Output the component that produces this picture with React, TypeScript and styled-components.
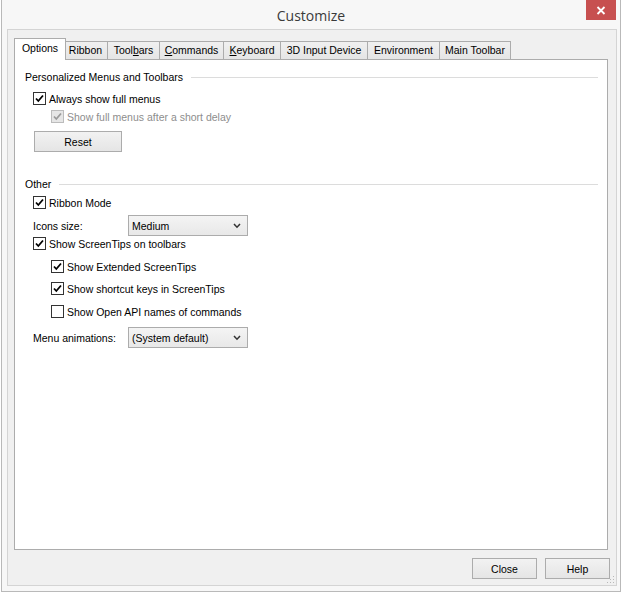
import React from "react";
import styled, { createGlobalStyle } from "styled-components";

const Global = createGlobalStyle`
  html, body { margin: 0; padding: 0; background: #ffffff; }
  body { font-family: "Liberation Sans", Arial, sans-serif; font-size: 10.5px; color: #000; }
  * { box-sizing: border-box; }
`;

const Window = styled.div`
  width: 620px;
  height: 592px;
  margin-left: 1px;
  border: 1px solid #b9b9b9;
  border-top: none;
  background: #f7f7f7;
  display: flex;
  flex-direction: column;
  position: relative;
`;

const TitleBar = styled.div`
  height: 29px;
  display: flex;
  align-items: center;
  justify-content: center;
  font-family: "Open Sans", "Noto Sans", sans-serif;
  font-size: 14px;
  color: #3a3a3a;
  padding-top: 1px;
`;

const CloseX = styled.div`
  position: absolute;
  top: 0;
  right: 4px;
  width: 30px;
  height: 20px;
  background: #c75050;
  display: flex;
  align-items: center;
  justify-content: center;
`;

const Client = styled.div`
  flex: 1;
  margin: 0 3px 5px 5px;
  border: 1px solid #d4d4d4;
  background: #f0f0f0;
  display: flex;
  flex-direction: column;
  padding: 8px 8px 0 6px;
  position: relative;
`;

const TabStrip = styled.div`
  display: flex;
  align-items: flex-end;
  height: 22px;
  position: relative;
  z-index: 1;
`;

const Tab = styled.div<{ $w: number; $active?: boolean }>`
  width: ${(p) => p.$w}px;
  height: ${(p) => (p.$active ? 22 : 19)}px;
  margin: ${(p) => (p.$active ? "0 -2px 0 -2px" : "0 0 0 -1px")};
  border: 1px solid #acacac;
  border-bottom: ${(p) => (p.$active ? "none" : "1px solid #acacac")};
  background: ${(p) => (p.$active ? "#ffffff" : "linear-gradient(#f0f0f0, #e5e5e5)")};
  display: flex;
  align-items: center;
  justify-content: center;
  padding-bottom: ${(p) => (p.$active ? 3 : 1)}px;
  white-space: nowrap;
  position: relative;
  z-index: ${(p) => (p.$active ? 2 : 1)};
  &:first-child { margin-left: 0; }
`;

const Panel = styled.div`
  height: 491px;
  margin-top: -1px;
  background: #ffffff;
  border: 1px solid #acacac;
  display: flex;
  flex-direction: column;
  padding: 9px 9px 0 10px;
`;

const GroupHeader = styled.div<{ $top?: number }>`
  display: flex;
  align-items: center;
  height: 16px;
  margin-top: ${(p) => p.$top ?? 0}px;
  color: #000;
  gap: 8px;
  &::after {
    content: "";
    flex: 1;
    height: 1px;
    background: #dcdcdc;
  }
`;

const Row = styled.label<{ $indent?: number; $top: number; $disabled?: boolean }>`
  display: flex;
  align-items: center;
  height: 15px;
  margin-top: ${(p) => p.$top}px;
  margin-left: ${(p) => p.$indent ?? 8}px;
  color: ${(p) => (p.$disabled ? "#8d8d8d" : "#000")};
  gap: 3px;
  white-space: nowrap;
`;

const Box = styled.span<{ $disabled?: boolean }>`
  width: 13px;
  height: 13px;
  border: 1px solid ${(p) => (p.$disabled ? "#bcbcbc" : "#333333")};
  background: ${(p) => (p.$disabled ? "#e6e6e6" : "#ffffff")};
  display: inline-flex;
  align-items: center;
  justify-content: center;
  flex: none;
`;

const Check = ({ on, disabled }: { on: boolean; disabled?: boolean }) => (
  <Box $disabled={disabled}>
    {on && (
      <svg width="9" height="9" viewBox="0 0 9 9">
        <path d="M1 4.5 L3.3 7 L8 1.5" fill="none" stroke={disabled ? "#9a9a9a" : "#000"} strokeWidth="1.8" />
      </svg>
    )}
  </Box>
);

const Btn = styled.div<{ $w: number }>`
  width: ${(p) => p.$w}px;
  height: 21px;
  border: 1px solid #acacac;
  background: linear-gradient(#f2f2f2, #e5e5e5);
  display: flex;
  align-items: center;
  justify-content: center;
  color: #000;
`;

const FieldRow = styled.div<{ $top: number; $indent?: number }>`
  display: flex;
  align-items: center;
  margin-top: ${(p) => p.$top}px;
  margin-left: ${(p) => p.$indent ?? 8}px;
  height: 21px;
`;

const FieldLabel = styled.span`
  width: 95px;
  white-space: nowrap;
`;

const Combo = styled.div`
  width: 120px;
  height: 21px;
  border: 1px solid #acacac;
  background: linear-gradient(#f4f4f4, #e8e8e8);
  display: flex;
  align-items: center;
  justify-content: space-between;
  padding: 0 6px 0 3px;
`;

const Chevron = () => (
  <svg width="8" height="6" viewBox="0 0 8 6">
    <path d="M1 1 L4 4.2 L7 1" fill="none" stroke="#333" strokeWidth="1.5" />
  </svg>
);

const Footer = styled.div`
  display: flex;
  justify-content: flex-end;
  gap: 8px;
  padding: 8px 0 0 0;
  margin-right: -2px;
`;

const Grip = styled.div`
  position: absolute;
  right: 2px;
  bottom: 2px;
  width: 8px;
  height: 8px;
  background-image: radial-gradient(circle, #b8b8b8 0.9px, transparent 1px);
  background-size: 3px 3px;
  clip-path: polygon(100% 0, 100% 100%, 0 100%);
`;

const U = styled.span`
  text-decoration: underline;
`;

export default function App() {
  return (
    <>
      <Global />
      <Window>
        <TitleBar>Customize</TitleBar>
        <CloseX>
          <svg width="10" height="9" viewBox="0 0 10 9">
            <path d="M1.5 1 L8.5 8 M8.5 1 L1.5 8" stroke="#fff" strokeWidth="1.8" />
          </svg>
        </CloseX>
        <Client>
          <TabStrip>
            <Tab $w={52} $active>Options</Tab>
            <Tab $w={45}>Ribbon</Tab>
            <Tab $w={53}>Tool<U>b</U>ars</Tab>
            <Tab $w={65}><U>C</U>ommands</Tab>
            <Tab $w={58}><U>K</U>eyboard</Tab>
            <Tab $w={88}>3D Input Device</Tab>
            <Tab $w={73}>Environment</Tab>
            <Tab $w={72}>Main Toolbar</Tab>
          </TabStrip>
          <Panel>
            <GroupHeader>Personalized Menus and Toolbars</GroupHeader>
            <Row $top={6}><Check on />Always show full menus</Row>
            <Row $top={3} $indent={26} $disabled><Check on disabled />Show full menus after a short delay</Row>
            <FieldRow $top={7} $indent={9}><Btn $w={88}>Reset</Btn></FieldRow>
            <GroupHeader $top={24}>Other</GroupHeader>
            <Row $top={3}><Check on />Ribbon Mode</Row>
            <FieldRow $top={5}>
              <FieldLabel>Icons size:</FieldLabel>
              <Combo>Medium<Chevron /></Combo>
            </FieldRow>
            <Row $top={0}><Check on />Show ScreenTips on toolbars</Row>
            <Row $top={8} $indent={26}><Check on />Show Extended ScreenTips</Row>
            <Row $top={7} $indent={26}><Check on />Show shortcut keys in ScreenTips</Row>
            <Row $top={8} $indent={26}><Check on={false} />Show Open API names of commands</Row>
            <FieldRow $top={8}>
              <FieldLabel>Menu animations:</FieldLabel>
              <Combo>(System default)<Chevron /></Combo>
            </FieldRow>
          </Panel>
          <Footer>
            <Btn $w={65}>Close</Btn>
            <Btn $w={65}>Help</Btn>
          </Footer>
          <Grip />
        </Client>
      </Window>
    </>
  );
}
